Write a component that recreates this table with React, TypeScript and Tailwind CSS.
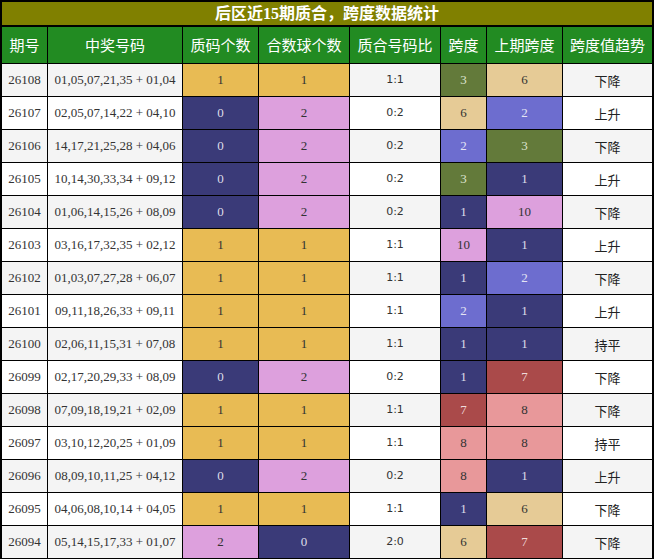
type Row = [string, string, number, number, string, number, number, string]

const rows: Row[] = [
  ['26108', '01,05,07,21,35 + 01,04', 1, 1, '1:1', 3, 6, '下降'],
  ['26107', '02,05,07,14,22 + 04,10', 0, 2, '0:2', 6, 2, '上升'],
  ['26106', '14,17,21,25,28 + 04,06', 0, 2, '0:2', 2, 3, '下降'],
  ['26105', '10,14,30,33,34 + 09,12', 0, 2, '0:2', 3, 1, '上升'],
  ['26104', '01,06,14,15,26 + 08,09', 0, 2, '0:2', 1, 10, '下降'],
  ['26103', '03,16,17,32,35 + 02,12', 1, 1, '1:1', 10, 1, '上升'],
  ['26102', '01,03,07,27,28 + 06,07', 1, 1, '1:1', 1, 2, '下降'],
  ['26101', '09,11,18,26,33 + 09,11', 1, 1, '1:1', 2, 1, '上升'],
  ['26100', '02,06,11,15,31 + 07,08', 1, 1, '1:1', 1, 1, '持平'],
  ['26099', '02,17,20,29,33 + 08,09', 0, 2, '0:2', 1, 7, '下降'],
  ['26098', '07,09,18,19,21 + 02,09', 1, 1, '1:1', 7, 8, '下降'],
  ['26097', '03,10,12,20,25 + 01,09', 1, 1, '1:1', 8, 8, '持平'],
  ['26096', '08,09,10,11,25 + 04,12', 0, 2, '0:2', 8, 1, '上升'],
  ['26095', '04,06,08,10,14 + 04,05', 1, 1, '1:1', 1, 6, '下降'],
  ['26094', '05,14,15,17,33 + 01,07', 2, 0, '2:0', 6, 7, '下降'],
]

const headers = ['期号', '中奖号码', '质码个数', '合数球个数', '质合号码比', '跨度', '上期跨度', '跨度值趋势']

// count columns: 0 / 1 / 2
const countColor: Record<number, string> = {
  0: 'bg-[#3a3a78] text-[#dddde8]',
  1: 'bg-[#e8bb54] text-[#333]',
  2: 'bg-[#dda0dd] text-[#333]',
}

// span columns
const spanColor: Record<number, string> = {
  1: 'bg-[#3a3a78] text-[#dddde8]',
  2: 'bg-[#6d6dcf] text-[#e4e4f4]',
  3: 'bg-[#637a3a] text-[#dde4d0]',
  6: 'bg-[#e6cb96] text-[#333]',
  7: 'bg-[#aa4a4a] text-[#f0dcdc]',
  8: 'bg-[#e8989a] text-[#333]',
  10: 'bg-[#dda0dd] text-[#333]',
}

const serif = "font-['Liberation_Serif','Noto_Sans_CJK_SC',serif]"
const cjk = "font-['Noto_Sans_CJK_SC',sans-serif]"

export default function App() {
  return (
    <div className="w-[654px] border-2 border-black bg-black">
      <div
        className={`h-[23px] bg-[#808000] flex items-center justify-center text-white text-[16px] font-bold ${serif}`}
      >
        后区近15期质合，跨度数据统计
      </div>
      <div className="mt-[2px] grid grid-cols-[45px_134px_75px_90px_90px_45px_75px_89px] gap-px bg-black">
        {headers.map((h) => (
          <div
            key={h}
            className={`h-[36px] bg-[#228b22] text-white text-[15px] flex items-center justify-center ${cjk}`}
          >
            {h}
          </div>
        ))}
        {rows.map((r, i) => {
          const bg = i % 2 === 0 ? 'bg-[#f4f4f4]' : 'bg-white'
          const cell = 'h-[32px] flex items-center justify-center'
          return [
            <div key={`${r[0]}a`} className={`${cell} ${bg} ${serif} text-[13px] text-[#333]`}>
              {r[0]}
            </div>,
            <div key={`${r[0]}b`} className={`${cell} ${bg} ${serif} text-[13px] text-[#333]`}>
              {r[1]}
            </div>,
            <div key={`${r[0]}c`} className={`${cell} ${countColor[r[2]]} ${serif} text-[13px]`}>
              {r[2]}
            </div>,
            <div key={`${r[0]}d`} className={`${cell} ${countColor[r[3]]} ${serif} text-[13px]`}>
              {r[3]}
            </div>,
            <div
              key={`${r[0]}e`}
              className={`${cell} ${bg} font-['DejaVu_Sans',sans-serif] text-[11px] text-[#333]`}
            >
              {r[4]}
            </div>,
            <div key={`${r[0]}f`} className={`${cell} ${spanColor[r[5]]} ${serif} text-[13px]`}>
              {r[5]}
            </div>,
            <div key={`${r[0]}g`} className={`${cell} ${spanColor[r[6]]} ${serif} text-[13px]`}>
              {r[6]}
            </div>,
            <div key={`${r[0]}h`} className={`${cell} ${bg} ${cjk} text-[13px] text-[#222] pt-[2px]`}>
              {r[7]}
            </div>,
          ]
        })}
      </div>
    </div>
  )
}
